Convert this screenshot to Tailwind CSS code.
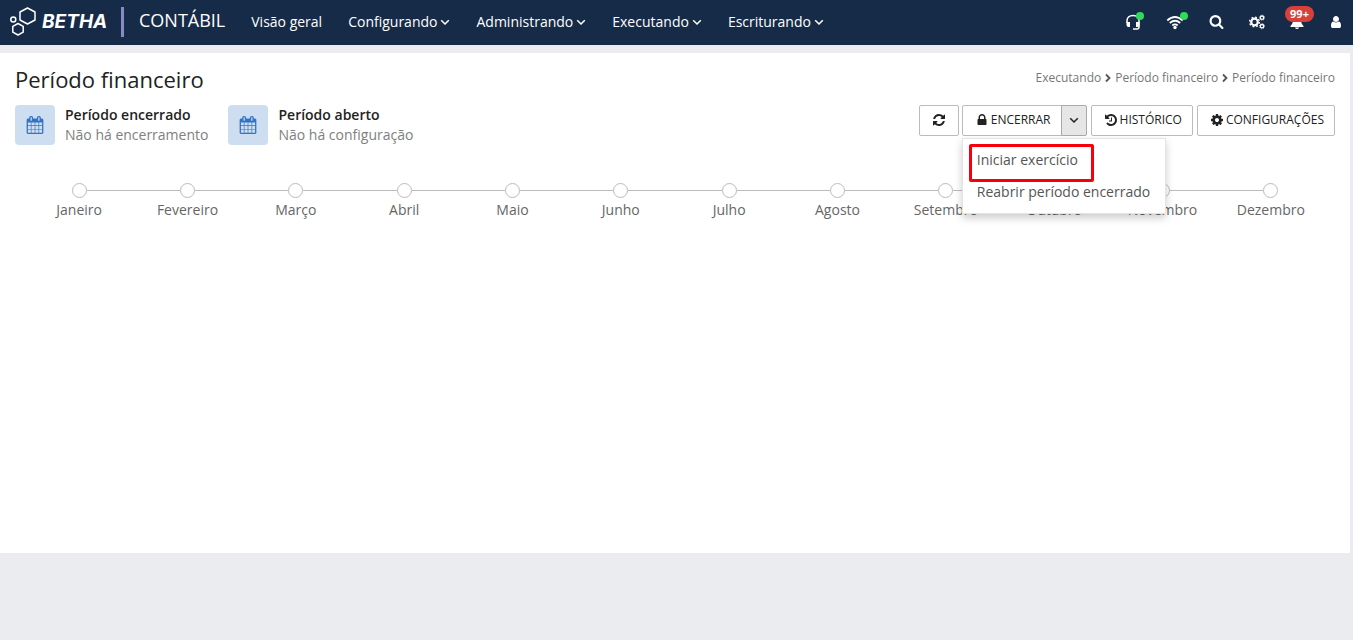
<!DOCTYPE html>
<html lang="pt-BR">
<head>
<meta charset="utf-8">
<meta name="viewport" content="width=device-width, initial-scale=1">
<title>Período financeiro</title>
<script src="https://cdn.jsdelivr.net/npm/@tailwindcss/browser@4"></script>
</head>
<body class="min-h-screen bg-[#ebecf0] font-['Open_Sans',sans-serif] text-sm text-[#222]">
<svg class="hidden" aria-hidden="true">
  <symbol id="down" viewBox="0 0 10 10"><path d="M1.2 3.2 5 7l3.8-3.8" fill="none" stroke="currentColor" stroke-width="1.5"/></symbol>
  <symbol id="right" viewBox="0 0 8 10"><path d="M2 1.5 5.500 5 2 8.500" fill="none" stroke="currentColor" stroke-width="1.8"/></symbol>
  <symbol id="calendar" viewBox="0 0 1792 1792"><path fill="currentColor" d="M192 1664h288v-288h-288v288zm352 0h320v-288h-320v288zm-352-352h288v-320h-288v320zm352 0h320v-320h-320v320zm-352-384h288v-288h-288v288zm736 736h320v-288h-320v288zm-384-736h320v-288h-320v288zm768 736h288v-288h-288v288zm-384-352h320v-320h-320v320zm-352-864v-288q0-13-9.500-22.500t-22.500-9.500h-64q-13 0-22.500 9.500t-9.500 22.500v288q0 13 9.500 22.500t22.500 9.500h64q13 0 22.500-9.500t9.500-22.500zm736 864h288v-320h-288v320zm-384-384h320v-288h-320v288zm384 0h288v-288h-288v288zm32-480v-288q0-13-9.500-22.500t-22.500-9.500h-64q-13 0-22.500 9.500t-9.500 22.500v288q0 13 9.500 22.500t22.500 9.500h64q13 0 22.500-9.500t9.500-22.500zm384-64v1280q0 52-38 90t-90 38h-1408q-52 0-90-38t-38-90v-1280q0-52 38-90t90-38h128v-96q0-66 47-113t113-47h64q66 0 113 47t47 113v96h384v-96q0-66 47-113t113-47h64q66 0 113 47t47 113v96h128q52 0 90 38t38 90z"/></symbol>
</svg>

<header class="flex h-[45px] items-center bg-[#162b48] pb-[2px] text-white">
  <a href="#" class="flex items-center pl-[10px]" aria-label="Betha">
    <svg class="h-[30px] w-[27px]" viewBox="0 0 27 30" fill="none" stroke="#fff" stroke-width="1.5">
      <path d="M17.500 1 25 5v8l-7.500 4L10 13V5z" stroke-linejoin="round"/>
      <path d="m8 16.500 5.200 2.800v5.900L8 28l-5.200-2.800v-5.900z" stroke-linejoin="round"/>
      <circle cx="3.300" cy="12.500" r="2.500"/>
    </svg>
    <span class="ml-[5px] w-[67px] font-['Inter',sans-serif] text-[19px] leading-6 font-bold italic">BETHA</span>
  </a>
  <span class="ml-3 h-[30px] w-[3px] bg-[#8989c9]"></span>
  <span class="ml-[15px] pb-[3px] text-lg leading-6">CONTÁBIL</span>
  <nav class="ml-[26px] flex items-center gap-[26px] text-sm">
    <a href="#">Visão geral</a>
    <a href="#" class="flex items-center gap-[3px]">Configurando <svg class="size-[10px]"><use href="#down"/></svg></a>
    <a href="#" class="flex items-center gap-[3px]">Administrando <svg class="size-[10px]"><use href="#down"/></svg></a>
    <a href="#" class="flex items-center gap-[3px]">Executando <svg class="size-[10px]"><use href="#down"/></svg></a>
    <a href="#" class="flex items-center gap-[3px]">Escriturando <svg class="size-[10px]"><use href="#down"/></svg></a>
  </nav>
  <div class="ml-auto flex items-center gap-[25px] pr-[10px]">
    <button class="relative" aria-label="Suporte">
      <svg class="h-4 w-[16px]" viewBox="0 0 16 16" fill="none" stroke="#fff"><path d="M2 9V6.800C2 3.500 4.500 1.500 8 1.500s6 2 6 5.300V13q0 2-2 2H8" stroke-width="1.500"/><path d="M1.500 8H5v5H3.500q-2 0-2-2zM14.500 8H11v5h1.500q2 0 2-2z" fill="#fff" stroke="none"/></svg>
      <span class="absolute -top-[2px] left-[11px] size-2 rounded-full bg-[#2fdb59]"></span>
    </button>
    <button class="relative" aria-label="Conexão">
      <svg class="h-4 w-[18px]" viewBox="0 0 18 16" fill="none" stroke="#fff" stroke-width="1.700"><path d="M1.300 6.500Q9-.5 16.700 6.500M3.800 9Q9 4.500 14.200 9M6.300 11.500Q9 9.300 11.700 11.500"/><circle cx="9" cy="13.500" r="1.700" fill="#fff" stroke="none"/></svg>
      <span class="absolute -top-[2px] left-[14px] size-2 rounded-full bg-[#2fdb59]"></span>
    </button>
    <button aria-label="Pesquisar"><svg class="size-[15px]" viewBox="0 0 1792 1792" fill="#fff"><path d="M1216 832q0-185-131.500-316.500t-316.500-131.500-316.500 131.500-131.500 316.500 131.500 316.500 316.500 131.500 316.500-131.500 131.500-316.500zm512 832q0 52-38 90t-90 38q-54 0-90-38l-343-342q-179 124-399 124-143 0-273.500-55.500t-225-150-150-225-55.500-273.500 55.500-273.500 150-225 225-150 273.500-55.500 273.500 55.500 225 150 150 225 55.500 273.500q0 220-124 399l343 343q37 37 37 90z"/></svg></button>
    <button aria-label="Ferramentas"><svg class="h-4 w-[16px]" viewBox="0 0 16 16" fill="none" stroke="#fff"><circle cx="5.500" cy="8" r="3.300" stroke-width="2.200"/><circle cx="5.500" cy="8" r="4.900" stroke-width="1.300" stroke-dasharray="1.924"/><circle cx="13" cy="3.700" r="1.700" stroke-width="1.300"/><circle cx="13" cy="3.700" r="2.600" stroke-width=".7" stroke-dasharray="1.020"/><circle cx="13" cy="12.200" r="1.700" stroke-width="1.300"/><circle cx="13" cy="12.200" r="2.600" stroke-width=".7" stroke-dasharray="1.020"/></svg></button>
    <button class="relative" aria-label="Notificações">
      <svg class="size-[14px]" viewBox="0 0 14 14" fill="#fff"><path d="M7 0q4 1 4 5c0 3 1 4.500 2.500 6v1h-13v-1C2 9.500 3 8 3 5q0-4 4-5zM5 12.400h4q-.3 1.600-2 1.600t-2-1.600z"/></svg>
      <span class="absolute -top-[9px] -left-[5px] w-[29px] rounded-full bg-[#d9403a] text-center text-[11px] leading-4 font-bold">99+</span>
    </button>
    <button aria-label="Usuário"><svg class="size-[14px]" viewBox="0 0 1792 1792" fill="#fff"><path d="M1536 1399q0 109-62.500 187t-150.500 78h-854q-88 0-150.500-78t-62.500-187q0-85 8.500-160.500t31.500-152 58.500-131 94-89 134.500-34.500q131 128 313 128t313-128q76 0 134.500 34.500t94 89 58.500 131 31.500 152 8.500 160.500zm-256-887q0 159-112.500 271.500t-271.500 112.500-271.500-112.500-112.500-271.500 112.500-271.500 271.500-112.500 271.500 112.500 112.500 271.500z"/></svg></button>
  </div>
</header>

<main class="mt-2 mr-[3px] min-h-[500px] bg-white px-[15px] pt-[11px]">
  <div class="flex items-start justify-between">
    <h1 class="text-[22px] leading-[30px]">Período financeiro</h1>
    <nav class="flex items-center gap-[3px] pt-[5px] text-xs leading-[18px] text-[#777]" aria-label="Trilha">
      <a href="#">Executando</a><svg class="h-[10px] w-2 text-[#555]"><use href="#right"/></svg>
      <a href="#">Período financeiro</a><svg class="h-[10px] w-2 text-[#555]"><use href="#right"/></svg>
      <span>Período financeiro</span>
    </nav>
  </div>

  <div class="mt-[11px] flex items-start justify-between">
    <div class="flex gap-5">
      <section class="flex gap-[10px]">
        <span class="flex size-10 items-center justify-center rounded bg-[#cddef1] text-[#3173c6]"><svg class="size-[18px]"><use href="#calendar"/></svg></span>
        <div class="leading-5"><h2 class="font-semibold">Período encerrado</h2><p class="text-[#808080]">Não há encerramento</p></div>
      </section>
      <section class="flex gap-[10px]">
        <span class="flex size-10 items-center justify-center rounded bg-[#cddef1] text-[#3173c6]"><svg class="size-[18px]"><use href="#calendar"/></svg></span>
        <div class="leading-5"><h2 class="font-semibold">Período aberto</h2><p class="text-[#808080]">Não há configuração</p></div>
      </section>
    </div>

    <div class="flex h-[31px] gap-1 text-xs">
      <button class="flex w-10 items-center justify-center rounded-xs border border-[#bbb] pb-px" aria-label="Atualizar"><svg class="size-[14px]" viewBox="0 0 1792 1792" fill="currentColor"><path d="M1639 1056q0 5-1 7-64 268-268 434.500t-478 166.500q-146 0-282.500-55t-243.500-157l-129 129q-19 19-45 19t-45-19-19-45v-448q0-26 19-45t45-19h448q26 0 45 19t19 45-19 45l-137 137q71 66 161 102t187 36q134 0 250-65t186-179q11-17 53-117 8-23 30-23h192q13 0 22.500 9.500t9.500 22.500zm25-800v448q0 26-19 45t-45 19h-448q-26 0-45-19t-19-45 19-45l138-138q-148-137-349-137-134 0-250 65t-186 179q-11 17-53 117-8 23-30 23h-199q-13 0-22.500-9.500t-9.500-22.500v-7q65-268 270-434.500t480-166.500q146 0 284 55.500t245 156.500l130-129q19-19 45-19t45 19 19 45z"/></svg></button>
      <div class="relative -ml-px flex">
        <button class="flex items-center gap-[2px] rounded-l-xs border border-[#bbb] pr-[10px] pb-[2px] pl-3"><svg class="size-[14px]" viewBox="0 0 1792 1792" fill="currentColor"><path d="M640 768h512v-192q0-106-75-181t-181-75-181 75-75 181v192zm832 96v576q0 40-28 68t-68 28h-960q-40 0-68-28t-28-68v-576q0-40 28-68t68-28h32v-192q0-184 132-316t316-132 316 132 132 316v192h32q40 0 68 28t28 68z"/></svg>ENCERRAR</button>
        <button class="-ml-px flex w-[26px] items-center justify-center rounded-r-xs border border-[#aaa] bg-[#e6e6e6] pb-px" aria-label="Mais opções" aria-expanded="true"><svg class="size-[10px]"><use href="#down"/></svg></button>
        <div class="absolute top-[33px] left-0 z-10 w-[204px] border border-[#e4e4e4] bg-white px-[6px] pt-[5px] pb-[5px] text-sm leading-8 text-[#555] shadow-[0_4px_8px_rgba(0,0,0,0.2)]">
          <a href="#" class="block h-[38px] w-[125px] rounded-xs border-3 border-[#f6000c] pl-[5px] leading-[26px]">Iniciar exercício</a>
          <a href="#" class="-mt-[6px] block pl-2 whitespace-nowrap">Reabrir período encerrado</a>
        </div>
      </div>
      <button class="flex items-center gap-[2px] rounded-xs border border-[#bbb] pr-[10px] pb-[2px] pl-3"><svg class="size-[14px]" viewBox="0 0 1792 1792" fill="currentColor"><path d="M1664 896q0 156-61 298t-164 245-245 164-298 61q-172 0-327-72.500t-264-204.500q-7-10-6.500-22.500t8.500-20.500l137-138q10-9 25-9 16 2 23 12 73 95 179 147t225 52q104 0 198.500-40.500t163.500-109.500 109.500-163.500 40.500-198.500-40.500-198.500-109.500-163.500-163.500-109.500-198.500-40.500q-98 0-188 35.500t-160 101.500l137 138q31 30 14 69-17 40-59 40h-448q-26 0-45-19t-19-45v-448q0-42 40-59 39-17 69 14l130 129q107-101 244.500-156.500t284.500-55.500q156 0 298 61t245 164 164 245 61 298zm-640-288v448q0 14-9 23t-23 9h-320q-14 0-23-9t-9-23v-64q0-14 9-23t23-9h224v-352q0-14 9-23t23-9h64q14 0 23 9t9 23z"/></svg>HISTÓRICO</button>
      <button class="flex items-center gap-[2px] rounded-xs border border-[#bbb] pr-[10px] pb-[2px] pl-3"><svg class="size-[14px]" viewBox="0 0 1792 1792" fill="currentColor"><path d="M1152 896q0-106-75-181t-181-75-181 75-75 181 75 181 181 75 181-75 75-181zm512-109v222q0 12-8 23t-20 13l-185 28q-19 54-39 91 35 50 107 138 10 12 10 25t-9 23q-27 37-99 108t-94 71q-12 0-26-9l-138-108q-44 23-91 38-16 136-29 186-7 28-36 28h-222q-14 0-24.500-8.500t-11.500-21.500l-28-184q-49-16-90-37l-141 107q-10 9-25 9-14 0-25-11-126-114-165-168-7-10-7-23 0-12 8-23 15-21 51-66.500t54-70.500q-27-50-41-99l-183-27q-13-2-21-12.500t-8-23.500v-222q0-12 8-23t19-13l186-28q14-46 39-92-40-57-107-138-10-12-10-24 0-10 9-23 26-36 98.500-107.500t94.500-71.500q13 0 26 10l138 107q44-23 91-38 16-136 29-186 7-28 36-28h222q14 0 24.500 8.500t11.500 21.500l28 184q49 16 90 37l142-107q9-9 24-9 13 0 25 10 129 119 165 170 7 8 7 22 0 12-8 23-15 21-51 66.500t-54 70.500q26 50 41 98l183 28q13 2 21 12.500t8 23.500z"/></svg>CONFIGURAÇÕES</button>
    </div>
  </div>

  <ol class="mt-[38px] grid grid-cols-12 px-[10px] text-center leading-5 text-[#666]">
    <li><div class="flex items-center"><span class="flex-1"></span><span class="size-[15px] rounded-full border border-[#bbb]"></span><span class="h-px flex-1 bg-[#bbb]"></span></div><p class="mt-[2px]">Janeiro</p></li>
    <li><div class="flex items-center"><span class="h-px flex-1 bg-[#bbb]"></span><span class="size-[15px] rounded-full border border-[#bbb]"></span><span class="h-px flex-1 bg-[#bbb]"></span></div><p class="mt-[2px]">Fevereiro</p></li>
    <li><div class="flex items-center"><span class="h-px flex-1 bg-[#bbb]"></span><span class="size-[15px] rounded-full border border-[#bbb]"></span><span class="h-px flex-1 bg-[#bbb]"></span></div><p class="mt-[2px]">Março</p></li>
    <li><div class="flex items-center"><span class="h-px flex-1 bg-[#bbb]"></span><span class="size-[15px] rounded-full border border-[#bbb]"></span><span class="h-px flex-1 bg-[#bbb]"></span></div><p class="mt-[2px]">Abril</p></li>
    <li><div class="flex items-center"><span class="h-px flex-1 bg-[#bbb]"></span><span class="size-[15px] rounded-full border border-[#bbb]"></span><span class="h-px flex-1 bg-[#bbb]"></span></div><p class="mt-[2px]">Maio</p></li>
    <li><div class="flex items-center"><span class="h-px flex-1 bg-[#bbb]"></span><span class="size-[15px] rounded-full border border-[#bbb]"></span><span class="h-px flex-1 bg-[#bbb]"></span></div><p class="mt-[2px]">Junho</p></li>
    <li><div class="flex items-center"><span class="h-px flex-1 bg-[#bbb]"></span><span class="size-[15px] rounded-full border border-[#bbb]"></span><span class="h-px flex-1 bg-[#bbb]"></span></div><p class="mt-[2px]">Julho</p></li>
    <li><div class="flex items-center"><span class="h-px flex-1 bg-[#bbb]"></span><span class="size-[15px] rounded-full border border-[#bbb]"></span><span class="h-px flex-1 bg-[#bbb]"></span></div><p class="mt-[2px]">Agosto</p></li>
    <li><div class="flex items-center"><span class="h-px flex-1 bg-[#bbb]"></span><span class="size-[15px] rounded-full border border-[#bbb]"></span><span class="h-px flex-1 bg-[#bbb]"></span></div><p class="mt-[2px]">Setembro</p></li>
    <li><div class="flex items-center"><span class="h-px flex-1 bg-[#bbb]"></span><span class="size-[15px] rounded-full border border-[#bbb]"></span><span class="h-px flex-1 bg-[#bbb]"></span></div><p class="mt-[2px]">Outubro</p></li>
    <li><div class="flex items-center"><span class="h-px flex-1 bg-[#bbb]"></span><span class="size-[15px] rounded-full border border-[#bbb]"></span><span class="h-px flex-1 bg-[#bbb]"></span></div><p class="mt-[2px]">Novembro</p></li>
    <li><div class="flex items-center"><span class="h-px flex-1 bg-[#bbb]"></span><span class="size-[15px] rounded-full border border-[#bbb]"></span><span class="flex-1"></span></div><p class="mt-[2px]">Dezembro</p></li>
  </ol>
</main>
</body>
</html>
